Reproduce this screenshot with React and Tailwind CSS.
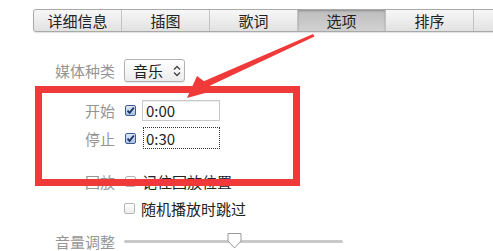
import React from 'react';

const tabs = ['详细信息', '插图', '歌词', '选项', '排序', ''];

const Check = ({ checked }) =>
    checked ? (
        <span className="block w-[11px] h-[11px] rounded-[2px] border border-[#3d5c8c] bg-gradient-to-b from-[#dfe9f7] to-[#a9c0e2] flex items-center justify-center">
            <svg width="9" height="9" viewBox="0 0 9 9">
                <path d="M1.5 4.6 L3.6 6.8 L7.8 1.6" fill="none" stroke="#1b3564" strokeWidth="1.8" />
            </svg>
        </span>
    ) : (
        <span className="block w-[11px] h-[11px] rounded-[2px] border border-[#b5b5b5] bg-gradient-to-b from-white to-[#ececec]" />
    );

const Label = ({ children }) => (
    <span className="w-[116px] shrink-0 text-right pr-[1px] text-[#959595]">{children}</span>
);

const App = () => {
    return (
        <div
            className="relative w-[493px] h-[251px] overflow-hidden bg-white text-[15px] leading-none text-[#222]"
            style={{ fontFamily: '"Noto Sans CJK SC", "Noto Sans", sans-serif' }}
        >
            {/* Tabs */}
            <div className="ml-[33px] mt-[9px] flex h-[23px] w-[520px] rounded-[3px] border border-[#a9a9a9] bg-gradient-to-b from-[#f7f7f7] to-[#e2e2e2] shadow-[0_1px_1px_rgba(0,0,0,0.12)]">
                {tabs.map((t, i) => (
                    <div
                        key={i}
                        className={`w-[88px] shrink-0 flex items-center justify-center border-r border-[#c2c2c2] ${
                            t === '选项'
                                ? 'bg-gradient-to-b from-[#bdbdbd] to-[#d2d2d2] shadow-[inset_0_1px_2px_rgba(0,0,0,0.25)]'
                                : ''
                        }`}
                    >
                        {t}
                    </div>
                ))}
            </div>

            {/* Media kind */}
            <div className="mt-[27px] flex items-center h-[23px]">
                <Label>媒体种类</Label>
                <div className="ml-[8px] h-[23px] w-[61px] rounded-[3px] border border-[#b2b2b2] bg-gradient-to-b from-white to-[#ececec] flex items-center pl-[8px] shadow-[0_1px_1px_rgba(0,0,0,0.1)]">
                    <span>音乐</span>
                    <svg className="ml-[9px]" width="10" height="12" viewBox="0 0 10 12">
                        <path d="M2 4.5 L5 1.5 L8 4.5 M2 7.5 L5 10.5 L8 7.5" fill="none" stroke="#444" strokeWidth="1.3" />
                    </svg>
                </div>
            </div>

            {/* Start */}
            <div className="mt-[18px] flex items-center h-[21px]">
                <Label>开始</Label>
                <span className="ml-[9px] flex"><Check checked /></span>
                <div className="ml-[6px] h-[21px] w-[78px] border border-[#c9c9c9] flex items-center pl-[3px] shadow-[inset_0_1px_1px_rgba(0,0,0,0.08)]">
                    0:00
                </div>
            </div>

            {/* Stop */}
            <div className="mt-[6px] flex items-center h-[22px]">
                <Label>停止</Label>
                <span className="ml-[9px] flex"><Check checked /></span>
                <div className="ml-[7px] h-[22px] w-[77px] border border-dotted border-[#333] flex items-center pl-[2px]">
                    0:30
                </div>
            </div>

            {/* Playback */}
            <div className="mt-[22px] flex items-center h-[20px]">
                <Label>回放</Label>
                <span className="ml-[9px] flex"><Check /></span>
                <span className="ml-[6px]">记住回放位置</span>
            </div>

            {/* Shuffle skip */}
            <div className="mt-[7px] flex items-center h-[20px]">
                <span className="w-[116px] shrink-0" />
                <span className="ml-[8px] flex"><Check /></span>
                <span className="ml-[6px]">随机播放时跳过</span>
            </div>

            {/* Volume */}
            <div className="mt-[13px] flex items-center h-[20px]">
                <Label>音量调整</Label>
                <div className="relative ml-[8px] w-[219px] h-[3px] rounded-full bg-[#c9c9c9]">
                    <svg className="absolute left-[102px] top-[-8px]" width="17" height="18" viewBox="0 0 17 18">
                        <path d="M2 1.5 H15 V9 L8.5 16 L2 9 Z" fill="#fdfdfd" stroke="#9a9a9a" strokeWidth="1" />
                    </svg>
                </div>
            </div>

            {/* Annotation box */}
            <div className="absolute left-[35px] top-[86px] w-[265px] h-[100px] border-[7px] border-[#f03a3a]" />

            {/* Annotation arrow */}
            <svg className="absolute inset-0 pointer-events-none" width="493" height="251" viewBox="0 0 493 251">
                <path d="M313 34 L314.5 36.5 L205 88 L202 82 Z" fill="#f03a3a" />
                <path d="M187 98 L197 76 L216 90 Z" fill="#f03a3a" />
            </svg>
        </div>
    );
};

export default App;
